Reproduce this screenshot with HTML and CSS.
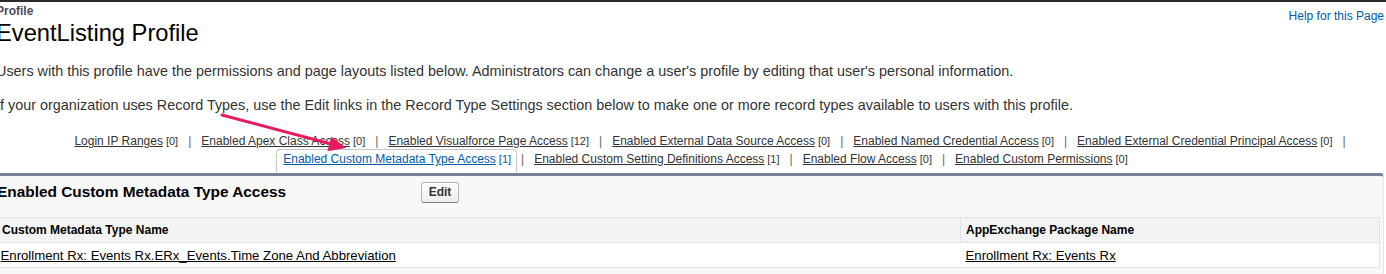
FILE: index.html
```html
<html>
    <head>
        <link rel="stylesheet" href="styles.css">
    </head>
    <body>
        <div class="topbar"></div>
        <div class="page">
            <div class="header">
                <div class="titles">
                    <div class="page-type">Profile</div>
                    <h1>EventListing Profile</h1>
                </div>
                <a class="help" href="#">Help for this Page</a>
            </div>
            <p class="intro">Users with this profile have the permissions and page layouts listed below. Administrators can change a user's profile by editing that user's personal information.</p>
            <p class="intro">If your organization uses Record Types, use the Edit links in the Record Type Settings section below to make one or more record types available to users with this profile.</p>

            <div class="links">
                <div class="link-row first">
                    <a href="#">Login IP Ranges</a><span class="count">[0]</span><span class="sep">|</span>
                    <a href="#">Enabled Apex Class Access</a><span class="count">[0]</span><span class="sep">|</span>
                    <a href="#">Enabled Visualforce Page Access</a><span class="count">[12]</span><span class="sep">|</span>
                    <a href="#">Enabled External Data Source Access</a><span class="count">[0]</span><span class="sep">|</span>
                    <a href="#">Enabled Named Credential Access</a><span class="count">[0]</span><span class="sep">|</span>
                    <a href="#">Enabled External Credential Principal Access</a><span class="count">[0]</span><span class="sep">|</span>
                </div>
                <div class="link-row second">
                    <span class="tab"><a href="#">Enabled Custom Metadata Type Access</a><span class="count">[1]</span></span><span class="sep">|</span>
                    <a href="#">Enabled Custom Setting Definitions Access</a><span class="count">[1]</span><span class="sep">|</span>
                    <a href="#">Enabled Flow Access</a><span class="count">[0]</span><span class="sep">|</span>
                    <a href="#">Enabled Custom Permissions</a><span class="count">[0]</span>
                </div>
            </div>

            <div class="block">
                <div class="block-head">
                    <h2>Enabled Custom Metadata Type Access</h2>
                    <button class="btn">Edit</button>
                </div>
                <table class="list">
                    <colgroup>
                        <col class="col-name">
                        <col>
                    </colgroup>
                    <tr class="head-row">
                        <th>Custom Metadata Type Name</th>
                        <th>AppExchange Package Name</th>
                    </tr>
                    <tr class="data-row">
                        <td><a href="#">Enrollment Rx: Events Rx.ERx_Events.Time Zone And Abbreviation</a></td>
                        <td><a href="#">Enrollment Rx: Events Rx</a></td>
                    </tr>
                </table>
            </div>
        </div>

        <!-- annotation arrow drawn over the page -->
        <svg class="arrow" width="360" height="160" viewBox="0 0 360 160">
            <line x1="222" y1="115" x2="333" y2="144.5" stroke="#ea1a5f" stroke-width="3" stroke-linecap="round"/>
            <polygon points="346,148 331.3,136.6 327.4,151.2" fill="#ea1a5f"/>
        </svg>
    </body>
</html>
```

FILE: styles.css
```css
body{
    margin: 0;
    font-family: "Liberation Sans", Arial, sans-serif;
    color: #333;
    background: #fff;
    overflow: hidden;
}

.topbar{
    height: 2px;
    background-color: #2b2b2b;
}

.page{
    margin-left: -4px;
    margin-right: 2px;
}

.header{
    display: flex;
    justify-content: space-between;
}

.page-type{
    font-size: 12px;
    font-weight: bold;
    color: #4a4a56;
    margin-top: 2px;
    line-height: 15px;
}

h1{
    font-size: 23.7px;
    font-weight: normal;
    color: #000;
    margin: 0;
    line-height: 28px;
}

.help{
    font-size: 12px;
    color: #015ba7;
    text-decoration: none;
    margin-top: 7px;
}

.intro{
    font-size: 14.4px;
    line-height: 17px;
    margin: 0;
    color: #333;
}

.intro:first-of-type{
    margin-top: 16px;
}

.intro + .intro{
    margin-top: 17px;
}

.links{
    margin-top: 19px;
    font-size: 12px;
}

.link-row{
    display: flex;
    justify-content: center;
    align-items: baseline;
    height: 16px;
    line-height: 16px;
}

.link-row.first{
    padding-left: 50px;
}

.link-row.second{
    height: 24px;
    padding-left: 24px;
}

.link-row a{
    color: #333;
    text-decoration: underline;
}

.count{
    font-size: 11px;
    margin-left: 3px;
}

.sep{
    margin: 0 10px 0 10px;
    color: #666;
}

.tab{
    display: inline-block;
    border: 1px solid #c7c7c7;
    border-bottom: none;
    border-radius: 4px 4px 0 0;
    padding: 1px 5px 6px 6px;
    background: #fff;
}

.tab + .sep{
    margin-left: 4px;
}

.tab a{
    color: #015ba7;
}

.tab .count{
    color: #015ba7;
}

.block{
    border-top: 3px solid #76819a;
    border-right: 1px solid #e6e6e6;
    border-bottom: 1px solid #e6e6e6;
    border-radius: 0 4px 4px 4px;
    background: #f8f8f8;
    padding-bottom: 8px;
}

.block-head{
    display: flex;
    align-items: center;
    height: 32px;
    margin-bottom: 9px;
}

h2{
    width: 425px;
    margin: 0;
    padding-left: 1px;
    box-sizing: border-box;
    font-size: 15.4px;
    font-weight: bold;
    color: #000;
}

.btn{
    font-family: "Liberation Sans", Arial, sans-serif;
    font-size: 12px;
    font-weight: bold;
    color: #333;
    height: 21px;
    width: 38px;
    padding: 0;
    border: 1px solid #b5b5b5;
    border-bottom-color: #7f7f7f;
    border-radius: 3px;
    background: linear-gradient(#fff, #ededed);
    margin-top: 0;
}

.list{
    width: 1384px;
    border-collapse: collapse;
    table-layout: fixed;
    font-size: 12px;
    background: #fff;
    margin-top: 3px;
}

.col-name{
    width: 964px;
}

.list th{
    text-align: left;
    font-weight: bold;
    color: #000;
    background: #f2f3f3;
    border: 1px solid #e0e3e5;
    height: 25px;
    padding: 0 5px;
    box-sizing: border-box;
}

.list td{
    height: 25px;
    padding: 0 5px 0 5px;
    font-size: 13.2px;
    border-bottom: 1px solid #e3e3e3;
    border-right: 1px solid #e3e3e3;
}

.list td:first-child{
    padding-left: 4px;
    border-right: none;
}

.list td a{
    color: #000;
    text-decoration: underline;
}

.arrow{
    position: absolute;
    left: 0;
    top: 0;
}
```
